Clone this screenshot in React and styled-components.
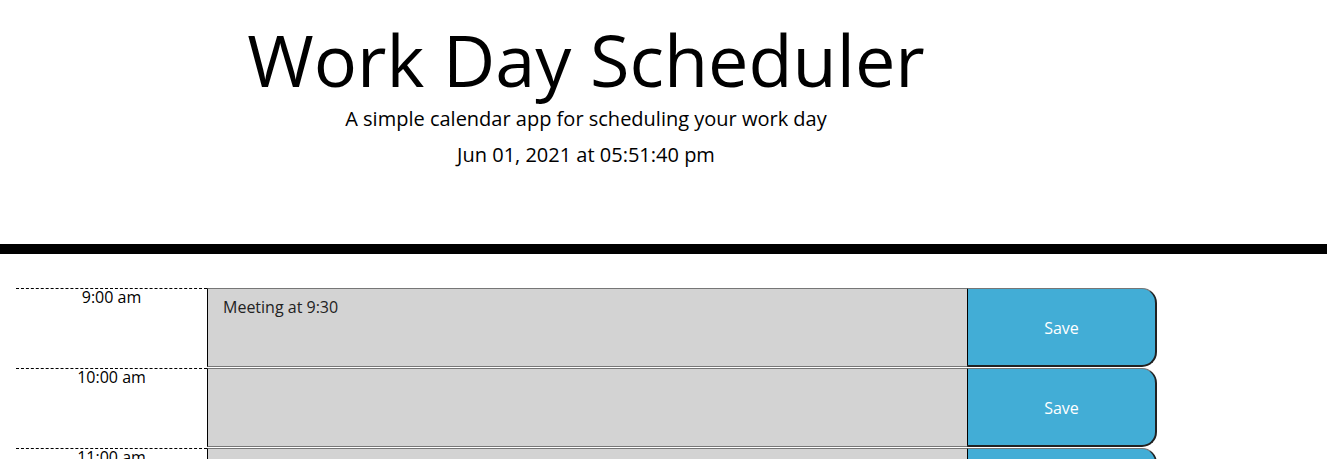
import React from "react";
import styled, { createGlobalStyle } from "styled-components";

const Global = createGlobalStyle`
  html, body { margin: 0; padding: 0; background: #fff; }
  body { font-family: "Open Sans", "Liberation Sans", sans-serif; color: #000; overflow: hidden; }
`;

const Header = styled.header`
  border-bottom: 10px solid #000;
  padding: 16px 0 74px;
  margin-bottom: 34px;
`;

const HeaderInner = styled.div`
  width: 1140px;
  margin-left: 16px;
  text-align: center;
`;

const Title = styled.h1`
  margin: 0;
  font-size: 72px;
  font-weight: 400;
  line-height: 1.2;
`;

const Lead = styled.p`
  margin: ${(p) => p.$top}px 0 0;
  font-size: 20px;
  font-weight: 400;
  line-height: 1.5;
`;

const Container = styled.main`
  width: 1141px;
  margin-left: 16px;
`;

const Row = styled.div`
  display: grid;
  grid-template-columns: 191px 760px 190px;
  height: 80px;
`;

const Hour = styled.div`
  border-top: 1px dashed #000;
  text-align: center;
  font-size: 16px;
  line-height: 16px;
  color: #000;
`;

const Text = styled.textarea`
  box-sizing: border-box;
  height: 79px;
  margin: 0;
  background: #d3d3d3;
  border: 1px solid #767676;
  border-left: 1px solid #000;
  border-right: none;
  padding: 8px 15px;
  font-family: "Open Sans", "Liberation Sans", sans-serif;
  font-size: 16px;
  line-height: 20px;
  color: #222;
  resize: none;
  outline: none;
`;

const SaveBtn = styled.button`
  box-sizing: border-box;
  height: 79px;
  margin: 0;
  background: #42add6;
  color: #fff;
  font-family: "Open Sans", "Liberation Sans", sans-serif;
  font-size: 16px;
  border-top: 1px solid #767676;
  border-left: 1px solid #000;
  border-right: 2px solid #222;
  border-bottom: 2px solid #222;
  border-radius: 0 15px 15px 0;
  padding: 2px 0 0;
  cursor: pointer;
`;

const rows = [
  { hour: "9:00 am", text: "Meeting at 9:30" },
  { hour: "10:00 am", text: "" },
  { hour: "11:00 am", text: "" },
];

export default function App() {
  return (
    <>
      <Global />
      <Header>
        <HeaderInner>
          <Title>Work Day Scheduler</Title>
          <Lead $top={2}>A simple calendar app for scheduling your work day</Lead>
          <Lead $top={6}>Jun 01, 2021 at 05:51:40 pm</Lead>
        </HeaderInner>
      </Header>
      <Container>
        {rows.map((r) => (
          <Row key={r.hour}>
            <Hour>{r.hour}</Hour>
            <Text defaultValue={r.text} />
            <SaveBtn>Save</SaveBtn>
          </Row>
        ))}
      </Container>
    </>
  );
}
